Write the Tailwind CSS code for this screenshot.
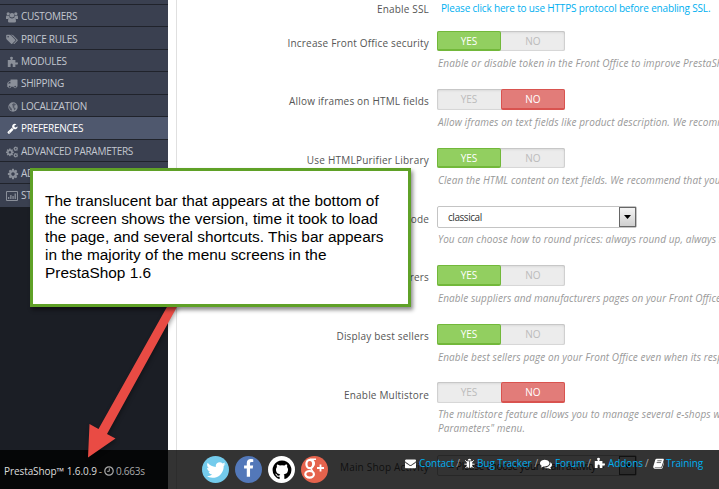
<!DOCTYPE html>
<html lang="en">
<head>
<meta charset="utf-8">
<title>Preferences</title>
<script src="https://cdn.jsdelivr.net/npm/@tailwindcss/browser@4"></script>
</head>
<body class="relative h-[489px] w-[719px] overflow-hidden bg-white font-['Open_Sans',sans-serif] text-[10px] whitespace-nowrap text-[#555]">

<svg class="hidden">
  <symbol id="cog" viewBox="0 0 1792 1792"><path d="M1152 896q0-106-75-181t-181-75-181 75-75 181 75 181 181 75 181-75 75-181zm512-109v222q0 12-8 23t-20 13l-185 28q-19 54-39 91 35 50 107 138 10 12 10 25t-9 23q-27 37-99 108t-94 71q-12 0-26-9l-138-108q-44 23-91 38-16 136-29 186-7 28-36 28h-222q-14 0-24.5-8.5t-11.5-21.5l-28-184q-49-16-90-37l-141 107q-10 9-25 9-14 0-25-11-126-114-165-168-7-10-7-23 0-12 8-23 15-21 51-66.5t54-70.5q-27-50-41-99l-183-27q-13-2-21-12.5t-8-23.5v-222q0-12 8-23t19-13l186-28q14-46 39-92-40-57-107-138-10-12-10-24 0-10 9-23 26-36 98.5-107.5t94.5-71.5q13 0 26 10l138 107q44-23 91-38 16-136 29-186 7-28 36-28h222q14 0 24.5 8.5t11.5 21.5l28 184q49 16 90 37l142-107q9-9 24-9 13 0 25 10 129 119 165 170 7 8 7 22 0 12-8 23-15 21-51 66.5t-54 70.5q26 50 41 98l183 28q13 2 21 12.5t8 23.5z"/></symbol>
  <symbol id="puzzle" viewBox="0 0 11 11"><path d="M3 1.700A1.600 1.600 0 0 1 6 1.700Q6 2.500 5.400 3.200V4H8.400V6.500H9.300Q10.900 5.900 11 7.500 10.900 9 9.300 8.500H8.400V11H5.700V9.300Q6 7.700 4.700 7.500 3.200 7.600 3.600 9.300V11H.8V4H3.700V3.200Q3 2.500 3 1.700z"/></symbol>
</svg>

<div class="flex h-full">
  <nav class="flex w-[168px] shrink-0 flex-col bg-[#1b1e25] text-[10px] tracking-[-0.27px] text-[#c3c7cf]">
    <div class="h-[5px] border-b border-[#20232b] bg-[#3a4050]"></div>
    <a class="flex h-[22px] items-center border-b border-[#20232b] bg-[#3a4050] pt-[2px] pl-[6px]"><svg class="mr-[3px] h-3 w-3 fill-[#8a8f99]" viewBox="0 0 12 12"><circle cx="2.2" cy="2.8" r="1.6"/><circle cx="9.8" cy="2.8" r="1.6"/><circle cx="6" cy="4.2" r="2.3"/><path d="M0 8V6q0-1.400 1-1.400 1 .7 2.400.3Q3.400 6 4 6.500 2.700 6.800 2.200 8zM12 8V6q0-1.400-1-1.400-1 .7-2.400.3Q8.600 6 8 6.500 9.300 6.800 9.800 8zM2 10.200q0-3.200 2-3.400 2 1.400 4 0 2 .2 2 3.400 0 1.300-1.300 1.300H3.300Q2 11.500 2 10.200z"/></svg><span>CUSTOMERS</span></a>
    <a class="flex h-[23px] items-center border-b border-[#20232b] bg-[#3a4050] pt-[2px] pl-[6px]"><svg class="mr-[3px] h-[11px] w-3 fill-[#8a8f99]" viewBox="0 0 1900 1792"><path d="M448 448q0-53-37.500-90.500t-90.500-37.500-90.500 37.500-37.500 90.500 37.500 90.500 90.500 37.500 90.500-37.500 37.500-90.500zm1067 576q0 53-37 90l-491 492q-39 37-91 37-53 0-90-37l-715-716q-38-37-64.500-101t-26.500-117v-416q0-52 38-90t90-38h416q53 0 117 26.500t102 64.500l715 714q37 39 37 91zm384 0q0 53-37 90l-491 492q-39 37-91 37-36 0-59-14t-53-45l470-470q37-37 37-90 0-52-37-91l-715-714q-38-38-102-64.500t-117-26.500h224q53 0 117 26.500t102 64.500l715 714q37 39 37 91z"/></svg><span>PRICE RULES</span></a>
    <a class="flex h-[22px] items-center border-b border-[#20232b] bg-[#3a4050] pt-[2px] pl-[7px]"><svg class="mr-[3px] h-[11px] w-[11px] fill-[#8a8f99]"><use href="#puzzle"/></svg><span>MODULES</span></a>
    <a class="flex h-[23px] items-center border-b border-[#20232b] bg-[#3a4050] pt-[1px] pl-[6px]"><svg class="mr-[3px] h-[11px] w-3 fill-[#8a8f99]" viewBox="0 0 1792 1792"><path d="M640 1408q0-52-38-90t-90-38-90 38-38 90 38 90 90 38 90-38 38-90zm-384-512h384v-256h-158q-13 0-22 9l-195 195q-9 9-9 22v30zm1280 512q0-52-38-90t-90-38-90 38-38 90 38 90 90 38 90-38 38-90zm256-1088v1024q0 15-4 26.500t-13.500 18.500-16.500 11.500-23.500 6-22.500 2-25.500 0-22.500-.5q0 106-75 181t-181 75-181-75-75-181h-384q0 106-75 181t-181 75-181-75-75-181h-64q-3 0-22.500.5t-25.500 0-22.500-2-23.500-6-16.500-11.500-13.500-18.500-4-26.500q0-26 19-45t45-19v-320q0-8-.5-35t0-38 2.500-34.500 6.500-37 14-30.500 22.500-30l198-198q19-19 50.500-32t58.500-13h160v-192q0-26 19-45t45-19h1024q26 0 45 19t19 45z"/></svg><span>SHIPPING</span></a>
    <a class="flex h-[22px] items-center border-b border-[#20232b] bg-[#3a4050] pt-[2px] pl-[8px]"><svg class="mr-[3px] h-[10px] w-[10px]" viewBox="0 0 10 10"><circle cx="5" cy="5" r="4.700" fill="#8a8f99"/><path fill="#3a4050" d="M5.500 1.200l1.800.6.6 1.200-1.600.6.2 1-1 .6 1.700.6.5 1-1.200 1.600-.9-2.200-1-1 .2-1.300L4 2.600zM1 3.500l1.500 1.800L4 7l-.2 1.800Q1.500 8 1 5.500z" opacity=".7"/></svg><span>LOCALIZATION</span></a>
    <a class="flex h-[23px] items-center border-b border-[#20232b] bg-[#4f586e] pt-[1px] pl-[7px] text-white"><svg class="mr-[3px] h-[11px] w-[11px] fill-white" viewBox="0 0 1792 1792"><path d="M448 1472q0-26-19-45t-45-19-45 19-19 45 19 45 45 19 45-19 19-45zm644-420l-682 682q-37 37-90 37-52 0-91-37l-106-108q-38-36-38-90 0-53 38-91l681-681q39 98 114.500 173.500t173.500 114.500zm634-435q0 39-23 106-47 134-164.500 217.500t-258.500 83.500q-185 0-316.500-131.500t-131.500-316.500 131.500-316.500 316.500-131.500q58 0 121.500 16.500t107.500 46.500q16 11 16 28t-16 28l-293 169v224l193 107q5-3 79-48.500t135.500-81 70.500-35.500q15 0 23.500 10t8.500 25z"/></svg><span>PREFERENCES</span></a>
    <a class="flex h-[22px] items-center border-b border-[#20232b] bg-[#3a4050] pt-[2px] pl-[6px]"><svg class="mr-[3px] h-3 w-3 fill-[#8a8f99]" viewBox="0 0 12 12"><use href="#cog" x="-.6" y="1.800" width="9" height="9"/><use href="#cog" x="7" y="0" width="5.500" height="5.500"/><use href="#cog" x="7" y="6.500" width="5.500" height="5.500"/></svg><span>ADVANCED PARAMETERS</span></a>
    <a class="flex h-[22px] items-center border-b border-[#20232b] bg-[#3a4050] pt-[2px] pl-[7px]"><svg class="mr-[2px] h-3 w-3 fill-[#8a8f99]"><use href="#cog"/></svg><span>ADMINISTRATION</span></a>
    <a class="flex h-[23px] items-center bg-[#3a4050] pl-[6px]"><svg class="mr-[3px] h-[10px] w-3" viewBox="0 0 12 10"><path fill="none" stroke="#8a8f99" d="M.5.5h11v9H.5z"/><path fill="#8a8f99" d="M2 6h1.300v2H2zM4.200 4h1.300v4H4.200zM6.400 5h1.300v3H6.400zM8.600 2.500h1.300V8H8.600z"/></svg><span>STATS</span></a>
  </nav>

  <main class="ml-2 flex min-w-0 flex-1 flex-col overflow-hidden border-l border-[#e0e0e0]">
    <div class="flex h-[31px]">
      <div class="w-[253px] shrink-0 pt-[2px] pr-[1px] text-right leading-[14px] tracking-[0.18px]">Enable SSL</div>
      <a class="ml-[11px] pt-[1px] leading-[14px] tracking-[-0.17px] text-[#00aff0]">Please click here to use HTTPS protocol before enabling SSL.</a>
    </div>

    <div class="flex h-[58px]">
      <div class="w-[253px] shrink-0 pt-[5px] pr-[1px] text-right leading-[14px] tracking-[0.18px]">Increase Front Office security</div>
      <div class="ml-[7px]">
        <div class="flex h-[20px] w-[128px] rounded-[2px] bg-[#ececec] text-center leading-[20px] text-[#bbb] inset-shadow-[0_1px_3px_rgba(0,0,0,0.15)] inset-ring inset-ring-[#dcdcdc]"><span class="w-16 rounded-[2px] border border-b-2 border-[#72b83a] bg-[#92cf60] leading-[18px] text-white">YES</span><span class="w-16">NO</span></div>
        <p class="mt-[5px] ml-px leading-[14px] tracking-[0.13px] text-[#999] italic">Enable or disable token in the Front Office to improve PrestaShop's security.</p>
      </div>
    </div>

    <div class="flex h-[59px]">
      <div class="w-[253px] shrink-0 pt-[5px] pr-[1px] text-right leading-[14px] tracking-[0.18px]">Allow iframes on HTML fields</div>
      <div class="ml-[7px]">
        <div class="flex h-[21px] w-[128px] rounded-[2px] bg-[#ececec] text-center leading-[21px] text-[#bbb] inset-shadow-[0_1px_3px_rgba(0,0,0,0.15)] inset-ring inset-ring-[#dcdcdc]"><span class="w-16">YES</span><span class="w-16 rounded-[2px] border border-b-2 border-[#d9534f] bg-[#e27c79] leading-[19px] text-white">NO</span></div>
        <p class="mt-[5px] ml-px leading-[14px] tracking-[0.09px] text-[#999] italic">Allow iframes on text fields like product description. We recommend that you leave</p>
      </div>
    </div>

    <div class="flex h-[58px]">
      <div class="w-[253px] shrink-0 pt-[5px] pr-[1px] text-right leading-[14px] tracking-[0.22px]">Use HTMLPurifier Library</div>
      <div class="ml-[7px]">
        <div class="flex h-[20px] w-[128px] rounded-[2px] bg-[#ececec] text-center leading-[20px] text-[#bbb] inset-shadow-[0_1px_3px_rgba(0,0,0,0.15)] inset-ring inset-ring-[#dcdcdc]"><span class="w-16 rounded-[2px] border border-b-2 border-[#72b83a] bg-[#92cf60] leading-[18px] text-white">YES</span><span class="w-16">NO</span></div>
        <p class="mt-[5px] ml-px leading-[14px] tracking-[0.09px] text-[#999] italic">Clean the HTML content on text fields. We recommend that you leave this option</p>
      </div>
    </div>

    <div class="flex h-[59px]">
      <div class="w-[253px] shrink-0 pt-[6px] pr-[1px] text-right leading-[14px] tracking-[0.18px]">Round mode</div>
      <div class="ml-[7px]">
        <div class="flex h-[22px] w-[200px] items-center justify-between rounded-[2px] border border-[#c4c4c4] pt-px pl-[10px] text-[#333]"><span class="tracking-[-0.45px]">classical</span><span class="mb-px flex h-[20px] w-[17px] items-center justify-center border border-[#666] bg-linear-to-b from-[#f4f4f4] to-[#cfcfcf]"><svg class="h-1 w-[7px]" viewBox="0 0 7 4"><path d="M0 0h7L3.500 4z"/></svg></span></div>
        <p class="mt-[4px] ml-px leading-[14px] tracking-[0.09px] text-[#999] italic">You can choose how to round prices: always round up, always round down</p>
      </div>
    </div>

    <div class="flex h-[59px]">
      <div class="w-[253px] shrink-0 pt-[5px] pr-[1px] text-right leading-[14px] tracking-[0.18px]">Display suppliers and manufacturers</div>
      <div class="ml-[7px]">
        <div class="flex h-[21px] w-[128px] rounded-[2px] bg-[#ececec] text-center leading-[21px] text-[#bbb] inset-shadow-[0_1px_3px_rgba(0,0,0,0.15)] inset-ring inset-ring-[#dcdcdc]"><span class="w-16 rounded-[2px] border border-b-2 border-[#72b83a] bg-[#92cf60] leading-[19px] text-white">YES</span><span class="w-16">NO</span></div>
        <p class="mt-[5px] ml-px leading-[14px] tracking-[0.06px] text-[#999] italic">Enable suppliers and manufacturers pages on your Front Office even when</p>
      </div>
    </div>

    <div class="flex h-[58px]">
      <div class="w-[253px] shrink-0 pt-[5px] pr-[1px] text-right leading-[14px] tracking-[0.18px]">Display best sellers</div>
      <div class="ml-[7px]">
        <div class="flex h-[21px] w-[128px] rounded-[2px] bg-[#ececec] text-center leading-[21px] text-[#bbb] inset-shadow-[0_1px_3px_rgba(0,0,0,0.15)] inset-ring inset-ring-[#dcdcdc]"><span class="w-16 rounded-[2px] border border-b-2 border-[#72b83a] bg-[#92cf60] leading-[19px] text-white">YES</span><span class="w-16">NO</span></div>
        <p class="mt-[5px] ml-px leading-[14px] tracking-[0.09px] text-[#999] italic">Enable best sellers page on your Front Office even when its respective module</p>
      </div>
    </div>

    <div class="flex h-[73px]">
      <div class="w-[253px] shrink-0 pt-[6px] pr-[1px] text-right leading-[14px] tracking-[0.18px]">Enable Multistore</div>
      <div class="ml-[7px]">
        <div class="flex h-[21px] w-[128px] rounded-[2px] bg-[#ececec] text-center leading-[21px] text-[#bbb] inset-shadow-[0_1px_3px_rgba(0,0,0,0.15)] inset-ring inset-ring-[#dcdcdc]"><span class="w-16">YES</span><span class="w-16 rounded-[2px] border border-b-2 border-[#d9534f] bg-[#e27c79] leading-[19px] text-white">NO</span></div>
        <p class="mt-[4px] ml-px leading-[14px] tracking-[0.1px] text-[#999] italic">The multistore feature allows you to manage several e-shops with one Back<br>Parameters" menu.</p>
      </div>
    </div>

    <div class="flex">
      <div class="w-[253px] shrink-0 pt-[5px] pr-[1px] text-right leading-[14px] tracking-[0.2px]">Main Shop Activity</div>
      <div class="ml-[7px] flex h-[21px] w-[200px] items-center justify-between rounded-[2px] border border-[#c4c4c4] pl-[10px] text-[#333]"><span class="pt-[2px] tracking-[-0.35px]">-- Please choose your main activity --</span><span class="flex h-[19px] w-[17px] items-center justify-center border border-[#555] bg-linear-to-b from-[#f4f4f4] to-[#cfcfcf]"><svg class="h-1 w-[7px]" viewBox="0 0 7 4"><path d="M0 0h7L3.500 4z"/></svg></span></div>
    </div>
  </main>
</div>

<footer class="absolute inset-x-0 bottom-0 flex h-[39px] bg-black/80">
  <div class="flex h-[39px] w-[202px] items-center pt-[3px] pl-[4px] tracking-[-0.08px] text-[#aaa]"><span class="text-[#ddd]">PrestaShop™ 1.6.0.9</span><span class="mx-[2px]">-</span><svg class="mr-[2px] h-[10px] w-[10px]" viewBox="0 0 10 10" fill="none" stroke="#aaa"><circle cx="5" cy="5" r="4.200" stroke-width="1.200"/><path d="M5.300 2.300v3H3.200"/></svg><span class="tracking-[-0.25px]">0.663s</span></div>
  <div class="flex gap-[6px] pt-[6px]">
    <span class="flex size-[27px] items-center justify-center rounded-full bg-[#74cbec]"><svg class="size-[22px] fill-white" viewBox="0 0 1792 1792"><path d="M1684 408q-67 98-162 167 1 14 1 42 0 130-38 259.500t-115.500 248.500-184.500 210.500-258 146-323 54.500q-271 0-496-145 35 4 78 4 225 0 401-138-105-2-188-64.500t-114-159.500q33 5 61 5 43 0 85-11-112-23-185.500-111.500t-73.500-205.500v-4q68 38 146 41-66-44-105-115t-39-154q0-88 44-163 121 149 294.500 238.500t371.500 99.500q-8-38-8-74 0-134 94.500-228.500t228.500-94.500q140 0 236 102 109-21 205-78-37 115-142 178 93-10 186-50z"/></svg></span>
    <span class="flex size-[27px] items-center justify-center rounded-full bg-[#5378b9]"><svg class="size-[19px] -translate-y-[1px] fill-white" viewBox="0 0 1792 1792"><path d="M1343 12v264h-157q-86 0-116 36t-30 108v189h293l-39 296h-254v759h-306v-759h-255v-296h255v-218q0-186 104-288.500t277-102.500q147 0 228 12z"/></svg></span>
    <span class="flex size-[27px] items-center justify-center rounded-full bg-white"><svg class="size-[22px] fill-black" viewBox="0 0 1792 1792"><path d="M896 128q209 0 385.500 103t279.500 279.500 103 385.500q0 251-146.500 451.500t-378.500 277.500q-27 5-40-7t-13-30q0-3 .5-76.500t.5-134.500q0-97-52-142 57-6 102.500-18t94-39 81-66.500 53-105 20.500-150.500q0-119-79-206 37-91-8-204-28-9-81 11t-92 44l-38 24q-93-26-192-26t-192 26q-16-11-42.500-27t-83.500-38.500-85-13.500q-45 113-8 204-79 87-79 206 0 85 20.500 150t52.500 105 80.500 67 94 39 102.500 18q-39 36-49 103-21 10-45 15t-57 5-65.500-21.500-55.500-62.500q-19-32-48.500-52t-49.500-24l-20-3q-21 0-29 4.500t-5 11.500 9 14 13 12l7 5q22 10 43.500 38t31.500 51l10 23q13 38 44 61.500t67 30 69.500 7 55.500-3.500l23-4q0 38 .5 88.500t.5 54.500q0 18-13 30t-40 7q-232-77-378.500-277.500t-146.500-451.500q0-209 103-385.500t279.500-279.500 385.500-103z"/></svg></span>
    <span class="flex size-[27px] items-center justify-center rounded-full bg-[#e5634d]"><svg class="size-[27px]" viewBox="0 0 27 27" fill="none" stroke="#fff"><ellipse cx="8.800" cy="8" rx="3.400" ry="4.200" stroke-width="2.200"/><path stroke-width="1.500" d="M9 3.200h6M11.500 4q2.500 2 1.500 5-2 2.500-3 3.500 0 1.300 1.800 2.300"/><ellipse cx="8.600" cy="18.300" rx="4.300" ry="3.300" stroke-width="2.200"/><path stroke-width="1.800" d="M16 12h7M19.500 8.500v7"/></svg></span>
  </div>
  <div class="ml-[77px] flex h-[27px] items-center tracking-[-0.1px] text-[#aaa]">
    <span class="flex w-[59px] items-center"><svg class="mr-[3px] h-[11px] w-[11px] fill-white" viewBox="0 0 1792 1792"><path d="M1792 710v794q0 66-47 113t-113 47h-1472q-66 0-113-47t-47-113v-794q44 49 101 87 362 246 497 345 57 42 92.500 65.500t94.500 48 110 24.500h2q51 0 110-24.500t94.500-48 92.500-65.500q170-123 498-345 57-39 100-87zm0-294q0 79-49 151t-122 123q-376 261-468 325-10 7-42.500 31t-54 38.500-52 32.500-57.500 27-50 9h-2q-23 0-50-9t-57.500-27-52-32.500-54-38.500-42.500-31q-91-64-262-182.500t-205-142.500q-62-42-117-115.500t-55-136.500q0-78 41.500-130t118.500-52h1472q65 0 112.500 47t47.500 113z"/></svg><a class="text-[#00aff0]">Contact</a><span class="ml-[2px]">/</span></span>
    <span class="flex w-[76px] items-center"><svg class="mr-[2px] h-[11px] w-[11px]" viewBox="0 0 12 12"><path fill="#fff" d="M4 2.800a2 2 0 0 1 4 0zM3 3.500h2.600V11Q3 10.600 3 8zM6.400 3.500H9V8q0 2.600-2.600 3z"/><path fill="none" stroke="#fff" d="M1.200 2.500L3.500 4.500M10.800 2.500L8.500 4.500M.5 6.800H3.500M8.500 6.800h3M1.500 11l2.200-2.500M10.500 11L8.300 8.500"/></svg><a class="text-[#00aff0]">Bug Tracker</a><span class="ml-[3px]">/</span></span>
    <span class="flex w-[54px] items-center"><svg class="mr-[3px] h-3 w-3 fill-white" viewBox="0 0 1792 1792"><path d="M1408 768q0 139-94 257t-256.500 186.500-353.500 68.500q-86 0-176-16-124 88-278 128-36 9-86 16h-3q-11 0-20.500-8t-11.500-21q-1-3-1-6.500t.5-6.500 2-6l2.500-5 3.500-5.500 4-5 4.500-5 4-4.500q5-6 23-25t26-29.500 22.500-29 25-38.500 20.500-44q-124-72-195-177t-71-224q0-139 94-257t256.500-186.500 353.500-68.500 353.500 68.500 256.500 186.500 94 257zm384 256q0 120-71 224.500t-195 176.500q10 24 20.500 44t25 38.500 22.500 29 26 29.500 23 25q1 1 4 4.500t4.500 5 4 5 3.500 5.500l2.500 5 2 6 .5 6.500-1 6.500q-3 14-13 22t-22 7q-50-7-86-16-154-40-278-128-90 16-176 16-271 0-472-132 58 4 88 4 161 0 309-45t264-129q125-92 192-212t67-254q0-77-23-152 129 71 204 178t75 230z"/></svg><a class="text-[#00aff0]">Forum</a><span class="ml-[2px]">/</span></span>
    <span class="flex w-[59px] items-center"><svg class="mr-[3px] mb-[2px] h-[11px] w-[11px] fill-white"><use href="#puzzle"/></svg><a class="text-[#00aff0]">Addons</a><span class="ml-[2px]">/</span></span>
    <span class="flex items-center"><svg class="mr-[2px] h-[11px] w-[11px]" viewBox="0 0 12 12"><path fill="#fff" d="M4 .8h7.200q.8.200.6 1L9.500 9q-.3 1-1.300 1H2q-.5.400.1.700h6.600q1 0 1.400-1L12 4v1.500l-1.500 5q-.3 1.200-1.500 1.200H1.800Q0 11.500.2 9.600L2.500 2Q3 .8 4 .8z"/><path stroke="#333" stroke-width=".8" d="M4.700 3h4.800M4 5h4.800"/></svg><a class="text-[#00aff0]">Training</a></span>
  </div>
</footer>

<svg class="absolute top-0 left-0 h-[489px] w-[200px] drop-shadow-[1px_2px_2px_rgba(0,0,0,0.35)]" viewBox="0 0 200 489"><path fill="#e94b44" d="M168 305h10L107 434l8.500 4.500L88 457.500l1.500-33.500 9 5z"/></svg>
<aside class="absolute top-[168px] left-[30px] h-[139px] w-[381px] border-3 border-[#5fa127] bg-white pt-[21px] pl-[12px] font-['Liberation_Sans',Arial,sans-serif] text-[15.4px] leading-[18px] text-black shadow-[2px_3px_4px_rgba(0,0,0,0.45)]">The translucent bar that appears at the bottom of<br>the screen shows the version, time it took to load<br>the page, and several shortcuts. This bar appears<br>in the majority of the menu screens in the<br>PrestaShop 1.6</aside>
</body>
</html>
